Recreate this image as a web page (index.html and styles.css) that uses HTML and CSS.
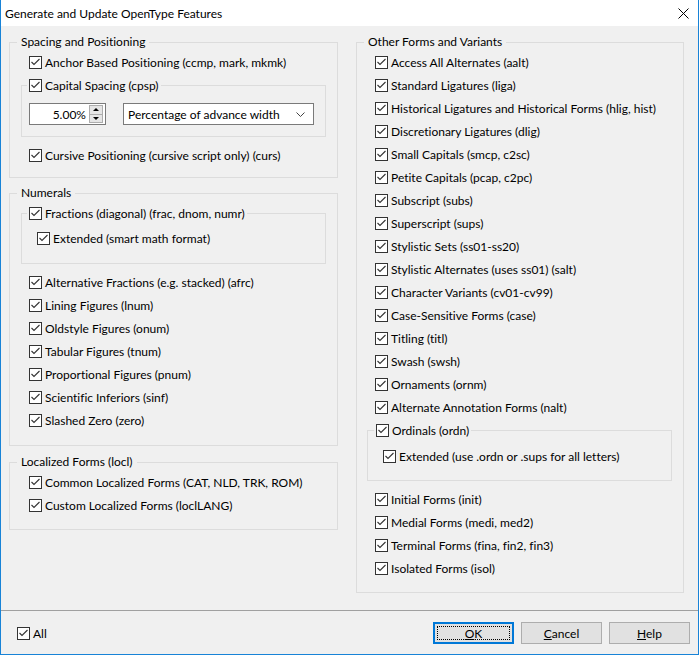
FILE: index.html
```html
<!DOCTYPE html>
<html lang="en">

<head>
  <meta charset="UTF-8">
  <title>Generate and Update OpenType Features</title>
  <link rel="stylesheet" href="styles.css">
</head>

<body>
  <div class="window">
    <div class="titlebar">
      <span class="title">Generate and Update OpenType Features</span>
      <svg class="close" width="11" height="11" viewBox="0 0 11 11">
        <path d="M0.5 0.5 L10.5 10.5 M10.5 0.5 L0.5 10.5" stroke="#000" stroke-width="1" fill="none" />
      </svg>
    </div>

    <div class="content">
      <div class="col col-left">
        <fieldset class="group g-spacing">
          <legend>Spacing and Positioning</legend>
          <div class="rows">
            <div class="check"><i class="box"></i>Anchor Based Positioning (ccmp, mark, mkmk)</div>
          </div>
          <fieldset class="sub sub-cpsp">
            <legend><div class="check"><i class="box"></i>Capital Spacing (cpsp)</div></legend>
            <div class="spin-row">
              <div class="spin">
                <span class="spin-value">5.00%</span>
                <span class="spin-btns">
                  <span class="spin-btn up"></span>
                  <span class="spin-btn down"></span>
                </span>
              </div>
              <div class="combo">
                <span>Percentage of advance width</span>
                <svg width="9" height="5" viewBox="0 0 9 5">
                  <path d="M0.5 0.5 L4.5 4.5 L8.5 0.5" stroke="#444" stroke-width="1" fill="none" />
                </svg>
              </div>
            </div>
          </fieldset>
          <div class="rows after-sub">
            <div class="check"><i class="box"></i>Cursive Positioning (cursive script only) (curs)</div>
          </div>
        </fieldset>

        <fieldset class="group g-numerals">
          <legend>Numerals</legend>
          <fieldset class="sub sub-frac">
            <legend><div class="check"><i class="box"></i>Fractions (diagonal) (frac, dnom, numr)</div></legend>
            <div class="check nested"><i class="box"></i>Extended (smart math format)</div>
          </fieldset>
          <div class="rows after-sub">
            <div class="check"><i class="box"></i>Alternative Fractions (e.g. stacked) (afrc)</div>
            <div class="check"><i class="box"></i>Lining Figures (lnum)</div>
            <div class="check"><i class="box"></i>Oldstyle Figures (onum)</div>
            <div class="check"><i class="box"></i>Tabular Figures (tnum)</div>
            <div class="check"><i class="box"></i>Proportional Figures (pnum)</div>
            <div class="check"><i class="box"></i>Scientific Inferiors (sinf)</div>
            <div class="check"><i class="box"></i>Slashed Zero (zero)</div>
          </div>
        </fieldset>

        <fieldset class="group g-locl">
          <legend>Localized Forms (locl)</legend>
          <div class="rows">
            <div class="check"><i class="box"></i>Common Localized Forms (CAT, NLD, TRK, ROM)</div>
            <div class="check"><i class="box"></i>Custom Localized Forms (loclLANG)</div>
          </div>
        </fieldset>
      </div>

      <div class="col col-right">
        <fieldset class="group g-other">
          <legend>Other Forms and Variants</legend>
          <div class="rows">
            <div class="check"><i class="box"></i>Access All Alternates (aalt)</div>
            <div class="check"><i class="box"></i>Standard Ligatures (liga)</div>
            <div class="check"><i class="box"></i>Historical Ligatures and Historical Forms (hlig, hist)</div>
            <div class="check"><i class="box"></i>Discretionary Ligatures (dlig)</div>
            <div class="check"><i class="box"></i>Small Capitals (smcp, c2sc)</div>
            <div class="check"><i class="box"></i>Petite Capitals (pcap, c2pc)</div>
            <div class="check"><i class="box"></i>Subscript (subs)</div>
            <div class="check"><i class="box"></i>Superscript (sups)</div>
            <div class="check"><i class="box"></i>Stylistic Sets (ss01-ss20)</div>
            <div class="check"><i class="box"></i>Stylistic Alternates (uses ss01) (salt)</div>
            <div class="check"><i class="box"></i>Character Variants (cv01-cv99)</div>
            <div class="check"><i class="box"></i>Case-Sensitive Forms (case)</div>
            <div class="check"><i class="box"></i>Titling (titl)</div>
            <div class="check"><i class="box"></i>Swash (swsh)</div>
            <div class="check"><i class="box"></i>Ornaments (ornm)</div>
            <div class="check"><i class="box"></i>Alternate Annotation Forms (nalt)</div>
          </div>
          <fieldset class="sub sub-ordn">
            <legend><div class="check"><i class="box"></i>Ordinals (ordn)</div></legend>
            <div class="check nested"><i class="box"></i>Extended (use .ordn or .sups for all letters)</div>
          </fieldset>
          <div class="rows after-sub">
            <div class="check"><i class="box"></i>Initial Forms (init)</div>
            <div class="check"><i class="box"></i>Medial Forms (medi, med2)</div>
            <div class="check"><i class="box"></i>Terminal Forms (fina, fin2, fin3)</div>
            <div class="check"><i class="box"></i>Isolated Forms (isol)</div>
          </div>
        </fieldset>
      </div>
    </div>

    <div class="footer">
      <div class="check"><i class="box"></i>All</div>
      <div class="buttons">
        <button class="btn default"><span class="focus"><u>O</u>K</span></button>
        <button class="btn"><u>C</u>ancel</button>
        <button class="btn"><u>H</u>elp</button>
      </div>
    </div>
  </div>
</body>

</html>
```

FILE: styles.css
```css
body {
  margin: 0;
  font-family: Lato, 'Segoe UI', sans-serif;
  font-size: 12px;
  font-variant-ligatures: none;
  color: #000;
}

.window {
  width: 699px;
  height: 655px;
  box-sizing: border-box;
  border: 1px solid #1883d7;
  border-top: none;
  background: #f0f0f0;
  display: flex;
  flex-direction: column;
}

/* title bar */
.titlebar {
  height: 26px;
  flex: none;
  background: #fff;
  display: flex;
  align-items: center;
  justify-content: space-between;
  padding: 0 9px 0 4px;
}

.close {
  display: block;
}

/* two columns of group boxes */
.content {
  display: flex;
  gap: 18px;
  padding: 8px 0 0 8px;
}

.col {
  display: flex;
  flex-direction: column;
}

.col-left {
  width: 329px;
}

.col-right {
  width: 328px;
}

fieldset {
  margin: 0;
  padding: 0;
  min-width: 0;
  border: 1px solid #dcdcdc;
}

.group > legend {
  margin-left: 7px;
  padding: 0 4px;
  line-height: 16px;
}

.group {
  padding-top: 1px;
}

.g-spacing {
  padding-bottom: 10px;
}

.g-numerals {
  margin-top: 7px;
  padding-bottom: 13px;
}

.g-locl {
  margin-top: 8px;
  padding-bottom: 12px;
}

.g-other {
  padding-bottom: 12px;
}

.rows {
  padding-left: 19px;
}

.col-right .rows {
  padding-left: 18px;
}

.rows.after-sub {
  margin-top: 7px;
}

/* nested group whose caption is a checkbox */
.sub {
  margin: 0 11px;
}

.sub > legend {
  margin-left: 5px;
  padding: 0 2px;
}

.sub-cpsp {
  padding: 6px 0 11px;
}

.sub-cpsp .spin-row {
  margin-left: 7px;
}

.sub-frac {
  padding: 2px 0 13px;
}

.sub .nested {
  margin-left: 15px;
}

.sub-ordn {
  margin: 0 11px 0 10px;
  padding: 3px 0 12px;
}

.sub-ordn > legend {
  margin-left: 6px;
}

/* checkbox rows */
.check {
  display: flex;
  align-items: center;
  height: 23px;
  white-space: nowrap;
}

.box {
  width: 13px;
  height: 13px;
  box-sizing: border-box;
  border: 1px solid #333;
  background: #fff url("data:image/svg+xml,%3Csvg xmlns='http://www.w3.org/2000/svg' width='11' height='11'%3E%3Cpath d='M1.5 5 L4 7.5 L9.5 2' stroke='%23333' stroke-width='1.1' fill='none'/%3E%3C/svg%3E") center / 11px 11px no-repeat;
  margin-right: 3px;
  flex: none;
}

/* spin box and combo */
.spin-row {
  display: flex;
  gap: 17px;
  height: 22px;
}

.spin {
  width: 77px;
  box-sizing: border-box;
  border: 1px solid #7a7a7a;
  background: #fff;
  display: flex;
  align-items: center;
  justify-content: flex-end;
  padding-right: 2px;
}

.spin-value {
  margin-right: 3px;
}

.spin-btns {
  display: flex;
  flex-direction: column;
  width: 14px;
  height: 18px;
}

.spin-btn {
  flex: 1;
  background: #e5e5e5;
  border: 1px solid #adadad;
  position: relative;
}

.spin-btn + .spin-btn {
  border-top: none;
}

.spin-btn::after {
  content: '';
  position: absolute;
  left: 3px;
  top: 2px;
  border-left: 3px solid transparent;
  border-right: 3px solid transparent;
}

.spin-btn.up::after {
  border-bottom: 3px solid #000;
}

.spin-btn.down::after {
  top: 2px;
  border-top: 3px solid #000;
}

.combo {
  width: 191px;
  box-sizing: border-box;
  border: 1px solid #7a7a7a;
  background: #fff;
  display: flex;
  align-items: center;
  justify-content: space-between;
  padding: 0 8px 0 4px;
}

/* bottom bar */
.footer {
  margin-top: auto;
  height: 44px;
  box-sizing: border-box;
  border-top: 1px solid #a0a0a0;
  display: flex;
  justify-content: space-between;
  align-items: flex-start;
  padding: 11px 8px 0 16px;
}

.buttons {
  display: flex;
  gap: 7px;
}

.btn {
  width: 81px;
  height: 22px;
  box-sizing: border-box;
  border: 1px solid #adadad;
  background: #e1e1e1;
  font: inherit;
  color: #000;
  padding: 0;
}

.btn.default {
  border-color: #0078d7;
  box-shadow: inset 0 0 0 1px #0078d7;
  padding: 3px;
}

.focus {
  display: flex;
  align-items: center;
  justify-content: center;
  height: 100%;
  border: 1px dotted #000;
  box-sizing: border-box;
}
```
